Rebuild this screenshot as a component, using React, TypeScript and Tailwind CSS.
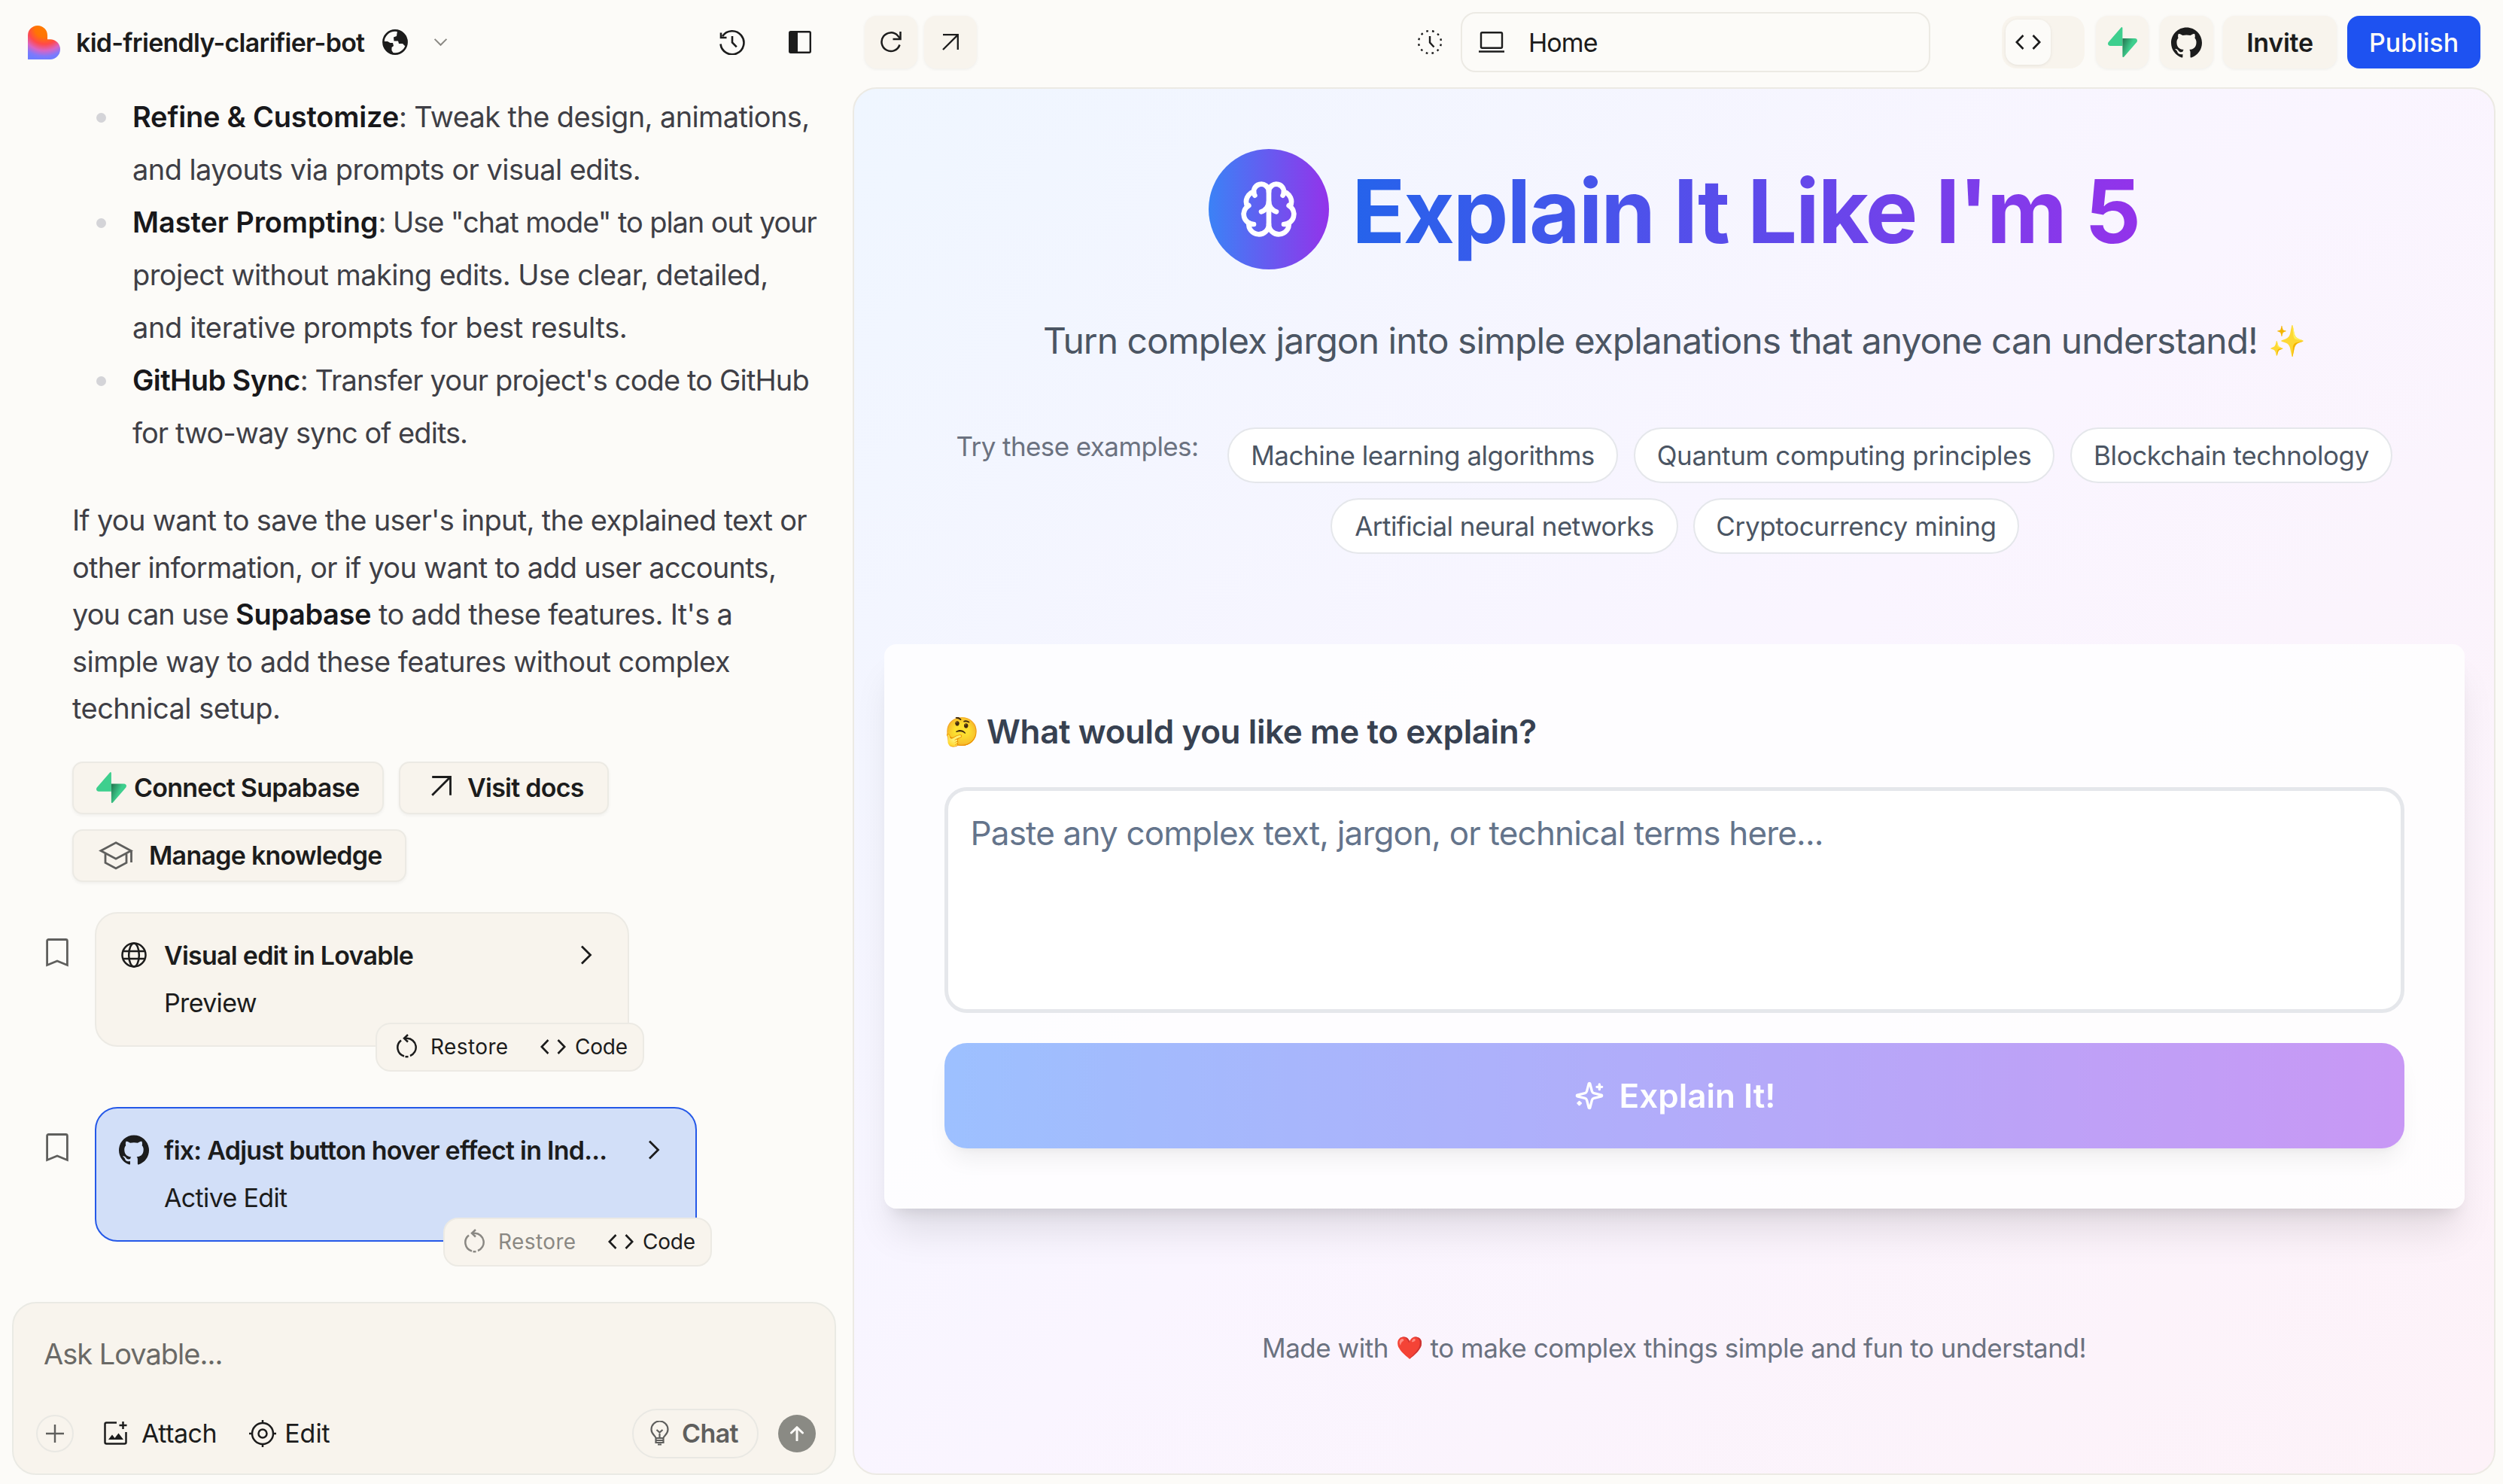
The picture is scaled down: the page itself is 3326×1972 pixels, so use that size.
import React from "react";
import { Brain } from "lucide-react";
import { SiGithub } from "react-icons/si";

interface IconProps {
  className?: string;
}

const LovableLogo: React.FC<IconProps> = ({ className }) => (
  <svg viewBox="0 0 43 45" className={className}>
    <defs>
      <radialGradient id="logo" gradientUnits="userSpaceOnUse" cx="22" cy="3" r="42">
        <stop offset="0" stopColor="#ff7a00" />
        <stop offset="0.3" stopColor="#ff7404" />
        <stop offset="0.52" stopColor="#ff4a4a" />
        <stop offset="0.72" stopColor="#d964c4" />
        <stop offset="0.9" stopColor="#7f79fb" />
        <stop offset="1" stopColor="#6f7cff" />
      </radialGradient>
    </defs>
    <path fill="url(#logo)" d="M0 45V13a13 13 0 0 1 26 0v5.2h3.6a13.4 13.4 0 0 1 0 26.8z" />
  </svg>
);

const SupabaseIcon: React.FC<IconProps> = ({ className }) => (
  <svg viewBox="0 0 39 40" className={className}>
    <defs>
      <linearGradient id="supa" x1="0" y1="0" x2="1" y2="0.6">
        <stop offset="0" stopColor="#24704d" />
        <stop offset="0.6" stopColor="#3ecf8e" />
      </linearGradient>
    </defs>
    <path fill="#3ecf8e" d="M17.4.7c.9-1.2 2-.8 2 .6V25H3.2C.4 25-.9 22.3.7 20z" />
    <path fill="url(#supa)" d="M21.6 39.3c-.9 1.2-2.2.8-2.2-.6V15H35.8c2.8 0 4.1 2.7 2.5 5z" />
  </svg>
);

const EarthIcon: React.FC<IconProps> = ({ className }) => (
  <svg viewBox="0 0 34 34" fill="none" className={className}>
    <circle cx="17" cy="17" r="15.6" stroke="currentColor" strokeWidth="2.6" />
    <path
      fill="currentColor"
      d="M20 2c7 1.5 12 7.5 12 15 0 2-.5 4-1.5 5.5L27 19h-5l-1-3.5h-5.5l-.5-5 4-1.5zM1.5 16h5.5l3.5 2h3.5l1 4-2.5 2v4l2.5 4C8 31 1.5 25 1.5 17z"
    />
  </svg>
);

const HistoryIcon: React.FC<IconProps> = ({ className }) => (
  <svg viewBox="0 0 34 34" fill="none" stroke="currentColor" strokeWidth="2.6" className={className}>
    <path d="M1.5 19.5A15.5 15.5 0 1 0 4 9.2" />
    <path d="M2 4.5v6.5h7.5" />
    <path d="M17 9v8.5l5.8 5.8" />
  </svg>
);

const PanelIcon: React.FC<IconProps> = ({ className }) => (
  <svg viewBox="0 0 30 30" fill="none" className={className}>
    <rect x="1.2" y="1.2" width="27.6" height="27.6" rx="1.5" stroke="currentColor" strokeWidth="2.4" />
    <path d="M1 1h11v28H1z" fill="currentColor" />
  </svg>
);

const RefreshIcon: React.FC<IconProps> = ({ className }) => (
  <svg viewBox="0 0 28 28" fill="none" stroke="currentColor" strokeWidth="2.5" className={className}>
    <path d="M25.5 17.5A12.3 12.3 0 1 1 23 5.5l3 3.5" />
    <path d="M26.5 0v10h-10" />
  </svg>
);

const ArrowUpRight: React.FC<IconProps> = ({ className }) => (
  <svg viewBox="0 0 22 22" fill="none" stroke="currentColor" strokeWidth="2.3" className={className}>
    <path d="M1 21 20.5 1.5M1 1.2h19.8V21" />
  </svg>
);

const DashedClock: React.FC<IconProps> = ({ className }) => (
  <svg viewBox="0 0 34 34" fill="none" stroke="currentColor" strokeWidth="2.4" className={className}>
    <circle cx="17" cy="17" r="15" strokeDasharray="2.6 5.254" strokeDashoffset="-2.6" />
    <path d="M17 9v8.5l5.5 6" />
  </svg>
);

const LaptopIcon: React.FC<IconProps> = ({ className }) => (
  <svg viewBox="0 0 34 28" fill="none" stroke="currentColor" strokeWidth="2.4" className={className}>
    <rect x="3" y="1.2" width="28" height="20.5" rx="1.5" />
    <path d="M0 26.5h34" />
  </svg>
);

const CodeIcon: React.FC<IconProps> = ({ className }) => (
  <svg viewBox="0 0 34 20" fill="none" stroke="currentColor" strokeWidth="2.6" className={className}>
    <path d="M10.5 1 1.8 10l8.7 9M23.5 1l8.7 9-8.7 9" />
  </svg>
);

const ChevronIcon: React.FC<IconProps> = ({ className }) => (
  <svg viewBox="0 0 16 26" fill="none" stroke="currentColor" strokeWidth="2.8" className={className}>
    <path d="m2 1.5 11.5 11.5L2 24.5" />
  </svg>
);

const SchoolIcon: React.FC<IconProps> = ({ className }) => (
  <svg viewBox="0 0 46 38" fill="none" stroke="currentColor" strokeWidth="2.8" className={className}>
    <path d="M23 1.8 43 12.5 23 23.2 3 12.5zM9 16v12.5L23 36l14-7.5V16M43.5 12.5V28" />
  </svg>
);

const BookmarkIcon: React.FC<IconProps> = ({ className }) => (
  <svg viewBox="0 0 30 38" fill="none" stroke="currentColor" strokeWidth="2.8" className={className}>
    <path d="M1.6 35.5V3.5q0-2 2-2h22.8q2 0 2 2v32L15 30z" />
  </svg>
);

const GlobeIcon: React.FC<IconProps> = ({ className }) => (
  <svg viewBox="0 0 34 34" fill="none" stroke="currentColor" strokeWidth="2.5" className={className}>
    <circle cx="17" cy="17" r="15.5" />
    <ellipse cx="17" cy="17" rx="6.8" ry="15.5" />
    <path d="M2.5 12h29M2.5 22h29" />
  </svg>
);

const RestoreIcon: React.FC<IconProps> = ({ className }) => (
  <svg viewBox="0 0 28 32" fill="none" stroke="currentColor" strokeWidth="2.5" className={className}>
    <path d="M10 5.8h4a12 12 0 0 1 4 23.2M6 8.5A12 12 0 0 0 10 29.5" />
    <path d="M15 1 10 5.8 15 10.5" />
    <path d="M11.5 30.2h4" />
  </svg>
);

const AttachIcon: React.FC<IconProps> = ({ className }) => (
  <svg viewBox="0 0 31 31" fill="none" stroke="currentColor" strokeWidth="2.5" className={className}>
    <path d="M17 1.5H3.5q-2 0-2 2v24q0 2 2 2h24q2 0 2-2V14" />
    <path d="M25.5 0v10M20.5 5h10" />
    <path fill="currentColor" stroke="none" d="m6 24 5-6.5 3.5 4.5 5-6.5L26 24z" />
  </svg>
);

const TargetIcon: React.FC<IconProps> = ({ className }) => (
  <svg viewBox="0 0 36 36" fill="none" stroke="currentColor" strokeWidth="2.5" className={className}>
    <circle cx="18" cy="18" r="14" />
    <circle cx="18" cy="18" r="5.5" />
    <path d="M18 0v4M18 32v4M0 18h4M32 18h4" />
  </svg>
);

const BulbIcon: React.FC<IconProps> = ({ className }) => (
  <svg viewBox="0 0 25 34" fill="none" stroke="currentColor" strokeWidth="2.2" className={className}>
    <path d="M7.5 23c0-3-6-4.5-6-11.5a11 11 0 0 1 22 0c0 7-6 8.5-6 11.5zM7.5 23v6h10v-6M7.5 26h10M10 31.5h5M8.5 12l4 3.5 4-3.5M12.5 15.5V23" />
  </svg>
);

const SparklesIcon: React.FC<IconProps> = ({ className }) => (
  <svg viewBox="0 0 24 24" fill="none" stroke="currentColor" strokeWidth="2" strokeLinecap="round" strokeLinejoin="round" className={className}>
    <path d="M9.937 15.5A2 2 0 0 0 8.5 14.063l-6.135-1.582a.5.5 0 0 1 0-.962L8.5 9.936A2 2 0 0 0 9.937 8.5l1.582-6.135a.5.5 0 0 1 .963 0L14.063 8.5A2 2 0 0 0 15.5 9.937l6.135 1.581a.5.5 0 0 1 0 .964L15.5 14.063a2 2 0 0 0-1.437 1.437l-1.582 6.135a.5.5 0 0 1-.963 0z" />
    <path d="M20 3v4M22 5h-4M4 17v2M5 18H3" />
  </svg>
);

interface EditCardProps {
  icon: React.ReactNode;
  title: string;
  status: string;
  active?: boolean;
}

const EditCard: React.FC<EditCardProps> = ({ icon, title, status, active }) => (
  <div className="flex items-start">
    <BookmarkIcon className="w-[30px] h-[38px] mt-[35px] ml-[61px] mr-[35px] text-[#5f5f5d]" />
    <div
      className={`relative h-[179px] rounded-[30px] ${
        active ? "w-[800px] bg-[#d2dff8] border-2 border-[#2458e8]" : "w-[710px] bg-[#f8f4ed] border-2 border-[#eceae4]"
      }`}
    >
      <div className="flex items-center h-[56px] mt-[27px] pl-[30px] pr-[47px]">
        <div className="w-[40px] flex justify-center">{icon}</div>
        <span className="ml-[20px] mt-[2px] text-[34px] font-semibold tracking-[-0.76px] whitespace-nowrap">{title}</span>
        <ChevronIcon className="w-[16px] h-[26px] ml-auto" />
      </div>
      <div className="pl-[90px] mt-[11px] text-[34px] leading-[50px] tracking-[-0.65px]">{status}</div>
      <div className="absolute -right-[22px] top-[145px] w-[357px] h-[65px] flex items-center rounded-[20px] bg-[#f8f4ed] border-2 border-[#eceae4] pl-[26px] text-[28px]">
        <div className={`flex items-center ${active ? "text-[#8a8883]" : ""}`}>
          <RestoreIcon className="w-[28px] h-[32px] -mt-[2px]" />
          <span className="ml-[17px] w-[103px] tracking-[0.4px]">Restore</span>
        </div>
        <CodeIcon className="w-[34px] h-[20px] ml-[43px]" />
        <span className="ml-[12px] tracking-[-0.2px]">Code</span>
      </div>
    </div>
  </div>
);

const actionButton =
  "flex items-center h-[70px] rounded-[14px] bg-[#f8f4ed] border-2 border-[#eceae4] shadow-[0_2px_4px_rgba(0,0,0,0.05)] text-[34px] font-semibold tracking-[-0.75px] whitespace-nowrap";

const ChatPanel: React.FC = () => (
  <div className="w-[1133px] h-[1972px] flex flex-col shrink-0">
    <div className="flex items-center h-[112px] pl-[37px]">
      <LovableLogo className="w-[43px] h-[45px]" />
      <span className="ml-[21px] w-[386px] text-[34px] font-semibold tracking-[-0.73px] whitespace-nowrap">
        kid-friendly-clarifier-bot
      </span>
      <EarthIcon className="w-[34px] h-[34px] ml-[21px]" />
      <ChevronIcon className="w-[11px] h-[20px] ml-[38px] rotate-90 text-[#8a8883]" />
      <HistoryIcon className="w-[34px] h-[34px] ml-[365px]" />
      <PanelIcon className="w-[30px] h-[30px] ml-[58px]" />
    </div>

    <ul className="pt-[8px] pl-[128px] text-[38px] leading-[70px] text-[#3f3f46] whitespace-nowrap">
      <li className="flex">
        <i className="w-[13px] h-[13px] mt-[30px] mr-[35px] rounded-full bg-[#d4d4d8]" />
        <div>
          <div className="tracking-[-0.62px]">
            <b className="font-semibold text-[#18181b] tracking-[-0.2px]">Refine & Customize</b>: Tweak the design, animations,
          </div>
          <div className="tracking-[-0.57px]">and layouts via prompts or visual edits.</div>
        </div>
      </li>
      <li className="flex">
        <i className="w-[13px] h-[13px] mt-[30px] mr-[35px] rounded-full bg-[#d4d4d8]" />
        <div>
          <div className="tracking-[-1.08px]">
            <b className="font-semibold text-[#18181b] tracking-[-0.1px]">Master Prompting</b>: Use "chat mode" to plan out your
          </div>
          <div className="tracking-[-0.56px]">project without making edits. Use clear, detailed,</div>
          <div className="tracking-[-0.36px]">and iterative prompts for best results.</div>
        </div>
      </li>
      <li className="flex">
        <i className="w-[13px] h-[13px] mt-[30px] mr-[35px] rounded-full bg-[#d4d4d8]" />
        <div>
          <div className="tracking-[-0.86px]">
            <b className="font-semibold text-[#18181b] tracking-[-0.6px]">GitHub Sync</b>: Transfer your project's code to GitHub
          </div>
          <div className="tracking-[-0.95px]">for two-way sync of edits.</div>
        </div>
      </li>
    </ul>

    <div className="mt-[50px] ml-[96px] text-[38px] leading-[62.6px] text-[#3f3f46] whitespace-nowrap">
      <div className="tracking-[-0.68px]">If you want to save the user's input, the explained text or</div>
      <div className="tracking-[-0.74px]">other information, or if you want to add user accounts,</div>
      <div className="tracking-[-0.68px]">
        <span className="tracking-[-0.95px]">you can use </span>
        <b className="font-semibold text-[#18181b] tracking-[-0.4px]">Supabase</b> to add these features. It's a
      </div>
      <div className="tracking-[-0.54px]">simple way to add these features without complex</div>
      <div className="tracking-[-0.52px]">technical setup.</div>
    </div>

    <div className="flex flex-wrap gap-[20px] mt-[39px] ml-[96px]">
      <button className={`${actionButton} w-[414px] pl-[30px]`}>
        <SupabaseIcon className="w-[40px] h-[41px] mr-[10px]" />
        Connect Supabase
      </button>
      <button className={`${actionButton} w-[279px] pl-[41px]`}>
        <ArrowUpRight className="w-[27px] h-[27px] mr-[21px] -mt-[4px]" />
        Visit docs
      </button>
      <button className={`${actionButton} w-[444px] pl-[33px]`}>
        <SchoolIcon className="w-[46px] h-[38px] mr-[21px] text-[#5f5f5d]" />
        Manage knowledge
      </button>
    </div>

    <div className="flex flex-col gap-[80px] mt-[40px]">
      <EditCard icon={<GlobeIcon className="w-[34px] h-[34px]" />} title="Visual edit in Lovable" status="Preview" />
      <EditCard icon={<SiGithub size={40} />} title="fix: Adjust button hover effect in Ind..." status="Active Edit" active />
    </div>

    <div className="mt-[80px] ml-[16px] w-[1095px] h-[230px] rounded-[32px] bg-[#f8f4ed] border-2 border-[#eaeae4] flex flex-col">
      <div className="mt-[41px] pl-[40px] text-[38px] leading-[52px] tracking-[-1px] text-[#6a6966]">Ask Lovable...</div>
      <div className="flex items-center h-[66px] mt-[47px] pl-[30px] pr-[25px] text-[34px]">
        <button className="w-[50px] h-[50px] rounded-full border-2 border-[#e9e8e3] flex items-center justify-center text-[#5f5f5d]">
          <svg viewBox="0 0 24 24" className="w-[24px] h-[24px]" stroke="currentColor" strokeWidth="2.4">
            <path d="M12 0v24M0 12h24" />
          </svg>
        </button>
        <AttachIcon className="w-[31px] h-[31px] ml-[40px]" />
        <span className="ml-[19px] tracking-[-0.48px]">Attach</span>
        <TargetIcon className="w-[36px] h-[36px] ml-[43px]" />
        <span className="ml-[11px]">Edit</span>
        <button className="ml-auto w-[168px] h-[66px] rounded-full border-2 border-[#e9e8e3] flex items-center pl-[22px] text-[#5f5f5d] font-semibold tracking-[-0.6px]">
          <BulbIcon className="w-[25px] h-[34px] mr-[17px]" />
          Chat
        </button>
        <button className="ml-[26px] w-[50px] h-[50px] rounded-full bg-[#8a8a84] flex items-center justify-center text-[#fcfbf8]">
          <svg viewBox="0 0 20 20" fill="none" className="w-[20px] h-[20px]" stroke="currentColor" strokeWidth="3" strokeLinecap="round">
            <path d="M10 19V2M2.5 9 10 1.8 17.5 9" />
          </svg>
        </button>
      </div>
    </div>
  </div>
);

const toolButton = "flex items-center justify-center h-[70px] rounded-[16px] bg-[#f8f4ed] shadow-[0_1px_4px_rgba(0,0,0,0.06)]";

const TopBar: React.FC = () => (
  <div className="flex items-center h-[112px] pl-[16px] text-[34px]">
    <button className={`${toolButton} w-[70px]`}>
      <RefreshIcon className="w-[28px] h-[28px]" />
    </button>
    <button className={`${toolButton} w-[70px] ml-[9px]`}>
      <ArrowUpRight className="w-[22px] h-[22px]" />
    </button>
    <DashedClock className="w-[34px] h-[34px] ml-[585px]" />
    <div className="ml-[24px] w-[624px] h-[80px] rounded-[20px] border-2 border-[#eceae4] flex items-center pl-[22px]">
      <LaptopIcon className="w-[34px] h-[28px]" />
      <span className="ml-[32px] tracking-[-0.9px]">Home</span>
    </div>
    <div className="ml-[95px] w-[110px] h-[70px] rounded-[20px] bg-[#f8f4ed] flex items-center pl-[5px]">
      <div className="w-[60px] h-[60px] rounded-[16px] bg-[#fcfbf8] shadow-[0_1px_4px_rgba(0,0,0,0.08)] flex items-center justify-center">
        <CodeIcon className="w-[34px] h-[20px]" />
      </div>
    </div>
    <button className={`${toolButton} w-[70px] ml-[15px]`}>
      <SupabaseIcon className="w-[39px] h-[40px]" />
    </button>
    <button className={`${toolButton} w-[71px] ml-[15px]`}>
      <SiGithub size={41} />
    </button>
    <button className={`${toolButton} w-[151px] ml-[13px] font-semibold tracking-[-0.3px]`}>Invite</button>
    <button className="w-[177px] h-[70px] ml-[14px] rounded-[16px] bg-[#1e52f1] text-[#fcfbf8] font-medium">Publish</button>
  </div>
);

const pill =
  "h-[74px] flex items-center justify-center rounded-full bg-white border-2 border-[#e5e7eb] pl-[1px] text-[#4b5563] text-[35px] whitespace-nowrap";

const Preview: React.FC = () => (
  <div className="mt-[4px] w-[2183px] h-[1844px] rounded-[32px] border-2 border-[#eceae4] bg-[linear-gradient(135deg,#eff6ff,#faf5ff_50%,#fdf2f8)] overflow-hidden flex flex-col items-center">
    <div className="flex items-start h-[160px] mt-[80px]">
      <div className="w-[160px] h-[160px] rounded-full bg-[linear-gradient(90deg,#3b82f6,#9333ea)] flex items-center justify-center text-white">
        <Brain size={80} />
      </div>
      <h1 className="ml-[30px] text-[117px] leading-[165px] font-bold tracking-[-2.16px] whitespace-nowrap bg-[linear-gradient(90deg,#2563eb,#9333ea)] bg-clip-text text-transparent">
        Explain It Like I'm 5
      </h1>
    </div>
    <p className="mt-[60px] h-[70px] flex items-center text-[48px] tracking-[-0.99px] text-[#4b5563] whitespace-nowrap">
      Turn complex jargon into simple explanations that anyone can understand!
      <span className="ml-[14px] text-[40px]">✨</span>
    </p>

    <div className="mt-[80px] flex gap-[21px]">
      <span className="mr-[17px] h-[50px] leading-[50px] text-[35px] tracking-[-0.58px] text-[#6b7280] whitespace-nowrap">
        Try these examples:
      </span>
      <button className={`${pill} w-[519px] tracking-[-0.46px]`}>Machine learning algorithms</button>
      <button className={`${pill} w-[559px] tracking-[-0.36px]`}>Quantum computing principles</button>
      <button className={`${pill} w-[428px] tracking-[-0.42px]`}>Blockchain technology</button>
    </div>
    <div className="mt-[20px] flex gap-[20px] pl-[1px]">
      <button className={`${pill} w-[462px] tracking-[-0.56px]`}>Artificial neural networks</button>
      <button className={`${pill} w-[433px] tracking-[-0.36px]`}>Cryptocurrency mining</button>
    </div>

    <div className="mt-[120px] w-[2100px] h-[750px] rounded-[16px] bg-white/80 shadow-[0_40px_50px_-10px_rgba(0,0,0,0.1),0_16px_20px_-12px_rgba(0,0,0,0.1)] px-[80px] flex flex-col">
      <div className="flex items-center mt-[80px] h-[71px] text-[44px] font-semibold text-[#374151] tracking-[-0.4px]">
        <span className="text-[37px] mr-[11px]">🤔</span>
        What would you like me to explain?
      </div>
      <div className="mt-[39px] h-[300px] rounded-[30px] border-[5px] border-[#e5e7eb] bg-white pt-[26px] pl-[30px] text-[44px] leading-[60px] tracking-[-0.82px] text-[#64748b]">
        Paste any complex text, jargon, or technical terms here...
      </div>
      <button className="mt-[40px] h-[140px] rounded-[30px] bg-[linear-gradient(90deg,#3f85ff,#9335ed)] opacity-50 shadow-[0_20px_30px_-6px_rgba(0,0,0,0.12),0_8px_12px_-8px_rgba(0,0,0,0.12)] flex items-center justify-center pl-[2px] text-white text-[44px] font-semibold">
        <SparklesIcon className="w-[40px] h-[40px] mr-[20px]" />
        Explain It!
      </button>
    </div>

    <p className="mt-[155px] h-[60px] flex items-center text-[35px] tracking-[-0.47px] text-[#6b7280] whitespace-nowrap">
      Made with
      <span className="mx-[10px] text-[29px]">❤️</span>
      to make complex things simple and fun to understand!
    </p>
  </div>
);

export default function App() {
  return (
    <div className="w-[3326px] h-[1972px] flex overflow-hidden bg-[#fcfbf8] text-[#1c1c1c] font-['Inter',sans-serif]">
      <ChatPanel />
      <div className="flex-1">
        <TopBar />
        <Preview />
      </div>
    </div>
  );
}
